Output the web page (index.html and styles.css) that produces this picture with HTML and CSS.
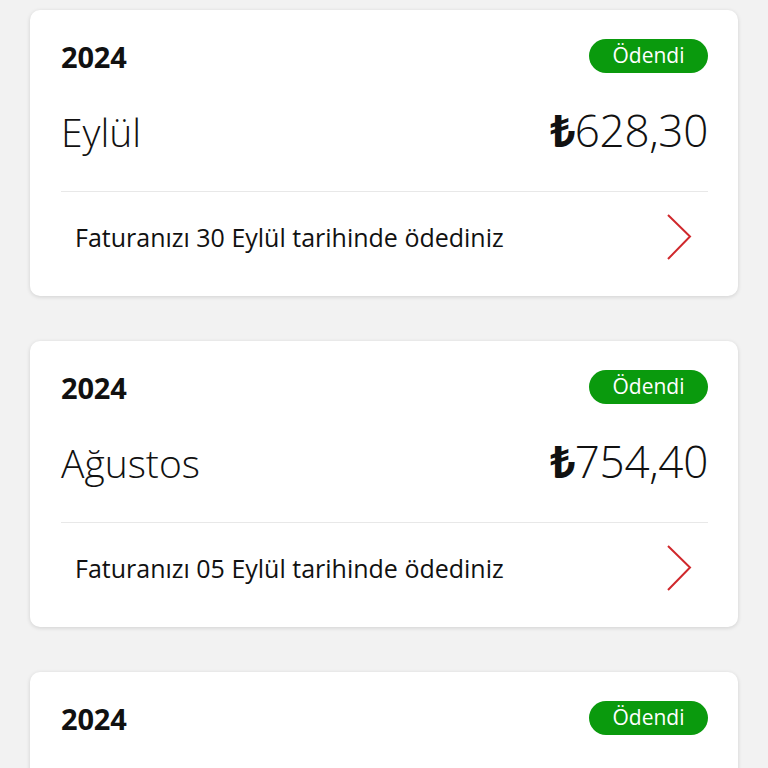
FILE: index.html
```html
<!DOCTYPE html>
<html lang="tr">
<head>
<meta charset="utf-8">
<title>Faturalar</title>
<link rel="stylesheet" href="styles.css">
</head>
<body>
<main class="list">
  <section class="card">
    <div class="top">
      <span class="year">2024</span>
      <span class="badge">Ödendi</span>
    </div>
    <div class="mid">
      <span class="month">Eylül</span>
      <span class="amount"><b class="cur">₺</b>628,30</span>
    </div>
    <div class="foot">
      <span class="note">Faturanızı 30 Eylül tarihinde ödediniz</span>
      <svg class="chev" viewBox="0 0 26 46" width="26" height="46"><path d="M2 1 L24 22.5 L2 45" fill="none" stroke="#d0282c" stroke-width="2"/></svg>
    </div>
  </section>
  <section class="card">
    <div class="top">
      <span class="year">2024</span>
      <span class="badge">Ödendi</span>
    </div>
    <div class="mid">
      <span class="month">Ağustos</span>
      <span class="amount"><b class="cur">₺</b>754,40</span>
    </div>
    <div class="foot">
      <span class="note">Faturanızı 05 Eylül tarihinde ödediniz</span>
      <svg class="chev" viewBox="0 0 26 46" width="26" height="46"><path d="M2 1 L24 22.5 L2 45" fill="none" stroke="#d0282c" stroke-width="2"/></svg>
    </div>
  </section>
  <section class="card card-partial">
    <div class="top">
      <span class="year">2024</span>
      <span class="badge">Ödendi</span>
    </div>
  </section>
</main>
</body>
</html>
```

FILE: styles.css
```css
html, body {
  margin: 0;
  padding: 0;
  background: #f2f2f2;
}
body {
  font-family: "Open Sans", "Noto Sans", "DejaVu Sans", sans-serif;
  color: #111;
  height: 768px;
  overflow: hidden;
}
.list {
  display: flex;
  flex-direction: column;
  gap: 45px;
  padding: 10px 30px 0 30px;
}
.card {
  background: #fff;
  border-radius: 10px;
  box-shadow: 0 1px 4px rgba(0, 0, 0, 0.14);
  padding: 29px 30px 0 31px;
  height: 286px;
  box-sizing: border-box;
  display: flex;
  flex-direction: column;
  flex-shrink: 0;
}
.top {
  display: flex;
  justify-content: space-between;
  align-items: center;
  height: 34px;
}
.year {
  font-size: 29px;
  font-weight: 700;
  line-height: 34px;
  margin-top: 2px;
  letter-spacing: -0.2px;
}
.badge {
  background: #0a9a0d;
  color: #fff;
  height: 34px;
  width: 119px;
  border-radius: 17px;
  font-size: 21px;
  line-height: 32px;
  text-align: center;
  box-sizing: border-box;
}
.mid {
  display: flex;
  justify-content: space-between;
  align-items: baseline;
  height: 119px;
  border-bottom: 1px solid #e8e8e8;
  padding-top: 29px;
  box-sizing: border-box;
}
.month {
  font-size: 39px;
  font-weight: 300;
  line-height: 56px;
}
.amount {
  font-size: 44px;
  font-weight: 300;
  line-height: 56px;
  letter-spacing: -0.3px;
}
.cur {
  font-weight: 700;
  margin-right: 1px;
  letter-spacing: -2px;
}
.foot {
  display: flex;
  justify-content: space-between;
  align-items: center;
  flex: 1;
  padding: 0 16px 14px 14px;
}
.note {
  font-size: 25px;
  line-height: 30px;
  letter-spacing: 0;
}
.chev {
  display: block;
}
```
